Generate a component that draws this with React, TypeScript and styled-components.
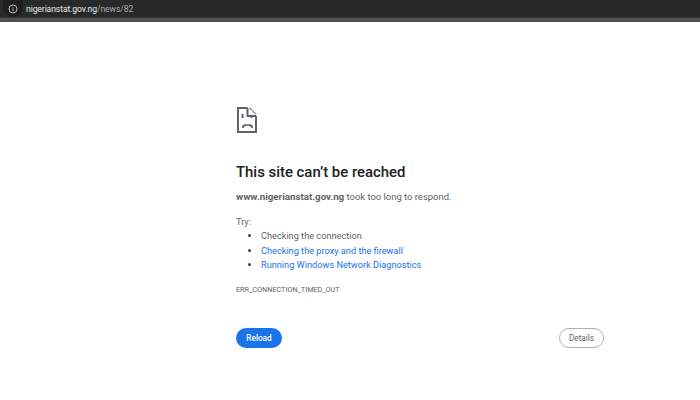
import React from 'react';
import styled, { createGlobalStyle } from 'styled-components';

const GlobalStyle = createGlobalStyle`
  html, body {
    margin: 0;
    padding: 0;
    background: #fff;
    font-family: Roboto, "Liberation Sans", sans-serif;
  }
`;

const Page = styled.div`
  width: 700px;
  height: 400px;
  overflow: hidden;
  display: flex;
  flex-direction: column;
`;

const AddressBar = styled.div`
  height: 22px;
  background: #505050;
`;

const UrlRow = styled.div`
  height: 18px;
  box-sizing: border-box;
  background: #292929;
  border-bottom: 1px solid #353535;
  display: flex;
  align-items: center;
  gap: 3px;
  padding-left: 3px;
`;

const InfoBadge = styled.div`
  width: 20px;
  height: 17px;
  display: flex;
  align-items: center;
  justify-content: center;
  background: #1f1f1f;
  border-radius: 0 0 10px 10px;
`;

const Host = styled.span`
  font-size: 8.6px;
  letter-spacing: -0.1px;
  color: #e8eaed;
`;

const UrlPath = styled.span`
  color: #a8a8a8;
`;

const Main = styled.main`
  width: 368px;
  margin-left: 236px;
  padding-top: 85px;
  display: flex;
  flex-direction: column;
`;

const Title = styled.h1`
  margin: 28px 0 0;
  font-size: 14.9px;
  line-height: 20px;
  font-weight: 500;
  color: #202124;
`;

const Message = styled.p`
  margin: 8px 0 0;
  font-size: 9.45px;
  line-height: 14px;
  color: #5f6368;

  strong {
    font-size: 9.75px;
    font-weight: 700;
  }
`;

const TryLabel = styled.p`
  margin: 11px 0 0;
  font-size: 9.2px;
  line-height: 14px;
  color: #5f6368;
`;

const Suggestions = styled.ul`
  margin: 0;
  padding-left: 25px;
  list-style: disc;
  font-size: 9.2px;
  line-height: 14.7px;
  color: #5f6368;

  li::marker {
    color: #3c4043;
  }
`;

const SuggestionLink = styled.a`
  color: #1a73e8;
  text-decoration: none;
`;

const ErrorCode = styled.div`
  margin-top: 11px;
  font-size: 7.25px;
  line-height: 11px;
  color: #5f6368;
`;

const Actions = styled.div`
  margin-top: 33px;
  display: flex;
  justify-content: space-between;
  align-items: center;
`;

const PillButton = styled.button<{ $primary?: boolean }>`
  height: 20px;
  width: ${p => (p.$primary ? '46px' : '45px')};
  padding: 0;
  border-radius: 10px;
  font-family: inherit;
  font-size: 8.2px;
  font-weight: ${p => (p.$primary ? 500 : 400)};
  color: ${p => (p.$primary ? '#fff' : '#5f6368')};
  background: ${p => (p.$primary ? '#1a73e8' : '#fff')};
  border: ${p => (p.$primary ? 'none' : '1px solid #b0b0b0')};
`;

function InfoIcon() {
  return (
    <svg width="10" height="10" viewBox="0 0 10 10" fill="none" stroke="#c8c8c8">
      <circle cx="5" cy="5" r="4" strokeWidth="0.9" />
      <path d="M5 4.4V7.2M5 2.7V3.6" strokeWidth="0.9" />
    </svg>
  );
}

function SadPageIcon() {
  return (
    <svg width="22" height="27" viewBox="0 0 22 27" fill="none" stroke="#5f6368" strokeWidth="2" style={{ display: 'block' }}>
      <path d="M11.5 1H2V25H20V9" />
      <path d="M11.5 1V9H20" />
      <path d="M13 1H14.5V2.5H16V4H17.5V5.5H19V7H20.5" strokeWidth="1" opacity="0.7" />
      <path d="M6.5 7V11M15.5 9V11" />
      <path d="M7 21V19H8.5V18H14.5V19H16V21" strokeWidth="1.7" />
    </svg>
  );
}

export default function App() {
  return (
    <Page>
      <GlobalStyle />
      <AddressBar>
        <UrlRow>
          <InfoBadge><InfoIcon /></InfoBadge>
          <Host>nigerianstat.gov.ng<UrlPath>/news/82</UrlPath></Host>
        </UrlRow>
      </AddressBar>
      <Main>
        <SadPageIcon />
        <Title>This site can’t be reached</Title>
        <Message><strong>www.nigerianstat.gov.ng</strong> took too long to respond.</Message>
        <TryLabel>Try:</TryLabel>
        <Suggestions>
          <li>Checking the connection</li>
          <li><SuggestionLink href="#">Checking the proxy and the firewall</SuggestionLink></li>
          <li><SuggestionLink href="#">Running Windows Network Diagnostics</SuggestionLink></li>
        </Suggestions>
        <ErrorCode>ERR_CONNECTION_TIMED_OUT</ErrorCode>
        <Actions>
          <PillButton $primary>Reload</PillButton>
          <PillButton>Details</PillButton>
        </Actions>
      </Main>
    </Page>
  );
}
